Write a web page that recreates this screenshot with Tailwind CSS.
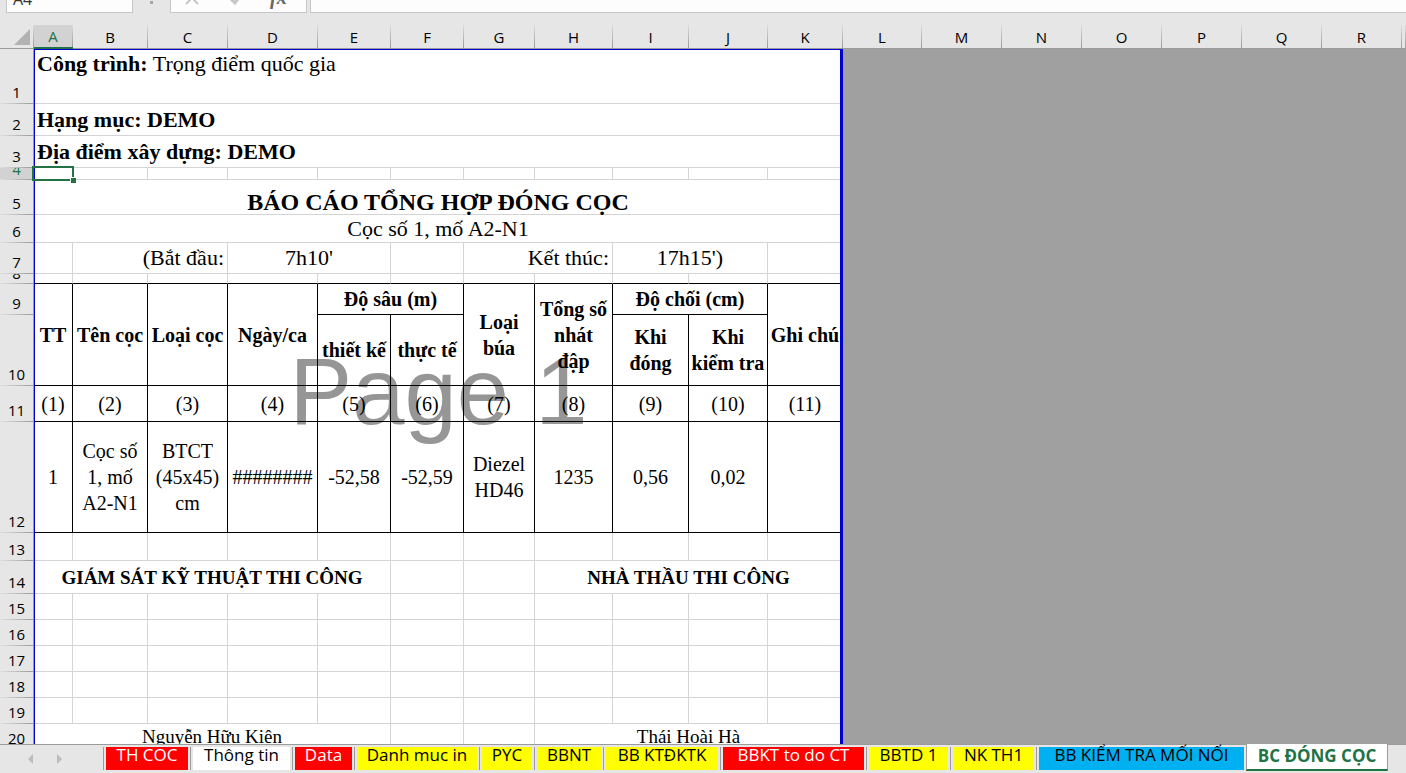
<!DOCTYPE html>
<html lang="vi">
<head>
<meta charset="utf-8">
<title>BC ĐÓNG CỌC</title>
<script src="https://cdn.jsdelivr.net/npm/@tailwindcss/browser@4"></script>
</head>
<body class="flex h-screen flex-col overflow-hidden bg-[#e6e6e6] font-['Open_Sans','Noto_Sans',sans-serif] text-black">

<!-- Formula bar -->
<header class="flex h-[25px] shrink-0 items-start overflow-hidden">
  <input aria-label="Name Box" value="A4" class="-mt-[13px] ml-[6px] h-[26px] w-[127px] border border-[#c6c6c6] bg-[#fdfdfd] px-1.5 pb-[3px] text-[16px] text-[#333]">
  <span class="mt-px ml-[17px] h-[3px] w-[3px] bg-[#a6a6a6]"></span>
  <div class="-mt-[13px] ml-[17px] flex h-[26px] w-[137px] items-center gap-6 border border-[#c6c6c6] bg-[#fdfdfd] pl-[11px]">
    <button aria-label="Cancel" class="h-4 w-5"><svg viewBox="0 0 20 16" class="h-4 w-5"><path d="M4 0l12 12M16 0L4 12" stroke="#c6c6c6" stroke-width="2" fill="none"/></svg></button>
    <button aria-label="Enter" class="h-4 w-5"><svg viewBox="0 0 20 16" class="h-4 w-5"><path d="M4 6l5 5 7-10" stroke="#c6c6c6" stroke-width="3" fill="none"/></svg></button>
    <button aria-label="Insert Function" class="pb-[7px] font-['Liberation_Serif',serif] text-[20px] leading-5 font-bold text-[#666] italic">fx</button>
  </div>
  <input aria-label="Formula" class="-mt-[13px] ml-[3px] h-[26px] min-w-0 flex-1 border border-r-0 border-[#c6c6c6] bg-[#fdfdfd] px-2">
</header>

<!-- Sheet -->
<main class="relative min-h-0 flex-1 overflow-hidden bg-[#a0a0a0]">
  <div class="absolute top-6 bottom-0 left-[34px] w-[809px] bg-white pt-[296px] text-center font-['Liberation_Sans',sans-serif] text-[94px] leading-none text-[#969696]" aria-hidden="true">Page 1</div>
  <div class="pointer-events-none absolute top-6 bottom-0 left-[34px] z-10 w-[809px] border-t border-r-[3px] border-l border-[#0000d0]"></div>

  <table class="relative w-full table-fixed border-separate border-spacing-0 font-['Liberation_Serif',serif] text-[22px] leading-[26px] [&_tbody_th]:border-r [&_tbody_th]:border-[#9b9b9b] [&_tbody_th]:bg-[#e6e6e6] [&_tbody_th]:bg-[linear-gradient(to_right,#e0e0e0,#9b9b9b)] [&_tbody_th]:bg-[length:100%_1px] [&_tbody_th]:bg-bottom [&_tbody_th]:bg-no-repeat [&_tbody_th]:p-0 [&_tbody_th]:pb-[2px] [&_tbody_th]:align-bottom [&_td]:border-r [&_td]:border-b [&_td]:p-0 [&_th]:font-['Open_Sans','Noto_Sans',sans-serif] [&_th]:text-[15px] [&_th]:leading-5 [&_th]:font-normal">
    <colgroup>
      <col class="w-[34px]"><col class="w-[39px]"><col class="w-[75px]"><col class="w-[80px]"><col class="w-[90px]"><col class="w-[73px]"><col class="w-[73px]"><col class="w-[71px]"><col class="w-[78px]"><col class="w-[76px]"><col class="w-[79px]"><col class="w-[75px]"><col class="w-[79px]"><col class="w-[80px]"><col class="w-[80px]"><col class="w-[80px]"><col class="w-[80px]"><col class="w-[80px]"><col class="w-[80px]"><col>
    </colgroup>
    <thead class="[&_th]:border-b [&_th]:border-[#9b9b9b] [&_th]:bg-[#e6e6e6] [&_th]:bg-[linear-gradient(to_bottom,#dcdcdc,#9b9b9b)] [&_th]:bg-[length:1px_100%] [&_th]:bg-right [&_th]:bg-no-repeat [&_th]:p-0 [&_th]:pr-px">
      <tr class="h-6">
        <th><button aria-label="Select all" class="block pt-px pl-[14px]"><svg viewBox="0 0 16 16" class="h-4 w-4"><path d="M16 0v16H0z" fill="#b2b2b2"/></svg></button></th>
        <th class="border-b-2! border-[#217346]! bg-[#d2d2d2]! text-[#217346]">A</th><th>B</th><th>C</th><th>D</th><th>E</th><th>F</th><th>G</th><th>H</th><th>I</th><th>J</th><th>K</th><th>L</th><th>M</th><th>N</th><th>O</th><th>P</th><th>Q</th><th>R</th><th></th>
      </tr>
    </thead>
    <tbody class="[&_td]:border-[#d4d4d4]">
      <tr class="h-[55px]"><th>1</th><td colspan="11" class="pt-[2px]! pl-[3px]! align-top"><b>Công trình:</b> Trọng điểm quốc gia</td></tr>
      <tr class="h-8"><th>2</th><td colspan="11" class="pl-[3px]! font-bold">Hạng mục: DEMO</td></tr>
      <tr class="h-8"><th>3</th><td colspan="11" class="pl-[3px]! font-bold">Địa điểm xây dựng: DEMO</td></tr>
      <tr class="h-3"><th class="bg-[#d2d2d2]! pb-px! text-[#217346]"><div class="flex h-[11px] items-end justify-center overflow-hidden">4</div></th><td class="relative"><div class="absolute -top-[2px] -right-[2px] -bottom-[2px] -left-[2px] z-20 border-2 border-[#217346]"><span class="absolute -right-[4px] -bottom-[4px] h-[6px] w-[6px] border-t border-l border-white bg-[#217346]"></span></div></td><td></td><td></td><td></td><td></td><td></td><td></td><td></td><td></td><td></td><td></td></tr>
      <tr class="h-[35px]"><th>5</th><td colspan="11" class="text-center align-bottom text-[24px] leading-6 font-bold">BÁO CÁO TỔNG HỢP ĐÓNG CỌC</td></tr>
      <tr class="h-7"><th>6</th><td colspan="11" class="text-center">Cọc số 1, mố A2-N1</td></tr>
      <tr class="h-[31px]"><th>7</th><td></td><td colspan="2" class="pr-[3px]! text-right">(Bắt đầu:</td><td colspan="2" class="text-center">7h10'</td><td></td><td colspan="2" class="pr-[3px]! text-right">Kết thúc:</td><td colspan="2" class="text-center">17h15')</td><td></td></tr>
      <tr class="h-[10px] [&_td]:border-b-black!"><th class="pb-px!"><div class="flex h-[9px] items-end justify-center overflow-hidden">8</div></th><td></td><td></td><td></td><td></td><td></td><td></td><td></td><td></td><td></td><td></td><td></td></tr>
    </tbody>
    <tbody class="text-center text-[20px] [&_td]:border-black">
      <tr class="h-[31px] font-bold"><th>9</th><td rowspan="2">TT</td><td rowspan="2">Tên cọc</td><td rowspan="2">Loại cọc</td><td rowspan="2">Ngày/ca</td><td colspan="2">Độ sâu (m)</td><td rowspan="2">Loại<br>búa</td><td rowspan="2">Tổng số<br>nhát<br>đập</td><td colspan="2">Độ chối (cm)</td><td rowspan="2">Ghi chú</td></tr>
      <tr class="h-[71px] font-bold"><th>10</th><td>thiết kế</td><td>thực tế</td><td>Khi<br>đóng</td><td>Khi<br>kiểm tra</td></tr>
      <tr class="h-9"><th>11</th><td>(1)</td><td>(2)</td><td>(3)</td><td>(4)</td><td>(5)</td><td>(6)</td><td>(7)</td><td>(8)</td><td>(9)</td><td>(10)</td><td>(11)</td></tr>
      <tr class="h-[111px]"><th>12</th><td>1</td><td>Cọc số<br>1, mố<br>A2-N1</td><td>BTCT<br>(45x45)<br>cm</td><td>########</td><td>-52,58</td><td>-52,59</td><td>Diezel<br>HD46</td><td>1235</td><td>0,56</td><td>0,02</td><td></td></tr>
    </tbody>
    <tbody class="text-center text-[19px] leading-[25px] [&_td]:border-[#d4d4d4]">
      <tr class="h-7"><th>13</th><td></td><td></td><td></td><td></td><td></td><td></td><td></td><td></td><td></td><td></td><td></td></tr>
      <tr class="h-[33px] font-bold"><th>14</th><td colspan="5">GIÁM SÁT KỸ THUẬT THI CÔNG</td><td></td><td></td><td colspan="4">NHÀ THẦU THI CÔNG</td></tr>
      <tr class="h-[26px]"><th>15</th><td></td><td></td><td></td><td></td><td></td><td></td><td></td><td></td><td></td><td></td><td></td></tr>
      <tr class="h-[26px]"><th>16</th><td></td><td></td><td></td><td></td><td></td><td></td><td></td><td></td><td></td><td></td><td></td></tr>
      <tr class="h-[26px]"><th>17</th><td></td><td></td><td></td><td></td><td></td><td></td><td></td><td></td><td></td><td></td><td></td></tr>
      <tr class="h-[26px]"><th>18</th><td></td><td></td><td></td><td></td><td></td><td></td><td></td><td></td><td></td><td></td><td></td></tr>
      <tr class="h-[26px]"><th>19</th><td></td><td></td><td></td><td></td><td></td><td></td><td></td><td></td><td></td><td></td><td></td></tr>
      <tr class="h-[26px]"><th>20</th><td colspan="5">Nguyễn Hữu Kiên</td><td></td><td></td><td colspan="4">Thái Hoài Hà</td></tr>
    </tbody>
  </table>
</main>

<!-- Sheet tabs -->
<nav aria-label="Sheets" class="flex h-[29px] shrink-0 border-t border-[#9b9b9b] text-[17px] leading-4 whitespace-nowrap">
  <div class="flex w-[103px] shrink-0 items-center gap-[22px] pl-[26px]">
    <button aria-label="Previous sheet"><svg viewBox="0 0 8 10" class="h-[10px] w-2"><path d="M7 0v10L2 5z" fill="#bcbcbc"/></svg></button>
    <button aria-label="Next sheet"><svg viewBox="0 0 8 10" class="h-[10px] w-2"><path d="M1 0v10l5-5z" fill="#bcbcbc"/></svg></button>
  </div>
  <div class="flex pt-[2px] [&>div]:h-[23px] [&>div]:shrink-0 [&>div]:border-l [&>div]:border-[#9b9b9b] [&>div]:px-[2px] [&_button]:h-full [&_button]:w-full [&_button]:pb-[7px]">
    <div class="w-[87px]"><button class="bg-[#ff0000] text-white">TH COC</button></div>
    <div class="w-[102px]"><button class="bg-white">Thông tin</button></div>
    <div class="w-[62px]"><button class="bg-[#ff0000] text-white">Data</button></div>
    <div class="w-[125px]"><button class="bg-[#ffff00]">Danh muc in</button></div>
    <div class="w-[55px]"><button class="bg-[#ffff00]">PYC</button></div>
    <div class="w-[69px]"><button class="bg-[#ffff00]">BBNT</button></div>
    <div class="w-[117px]"><button class="bg-[#ffff00]">BB KTĐKTK</button></div>
    <div class="w-[146px]"><button class="bg-[#ff0000] text-white">BBKT to do CT</button></div>
    <div class="w-[84px]"><button class="bg-[#ffff00]">BBTD 1</button></div>
    <div class="w-[86px]"><button class="bg-[#ffff00]">NK TH1</button></div>
    <div class="w-[210px]"><button class="bg-[#00b0f0]">BB KIỂM TRA MỐI NỐI</button></div>
  </div>
  <button aria-current="page" class="-mt-px h-[27px] w-[142px] shrink-0 border-x border-b-2 border-x-[#9b9b9b] border-b-[#217346] bg-white pb-[2px] font-bold text-[#217346]">BC ĐÓNG CỌC</button>
</nav>
</body>
</html>
